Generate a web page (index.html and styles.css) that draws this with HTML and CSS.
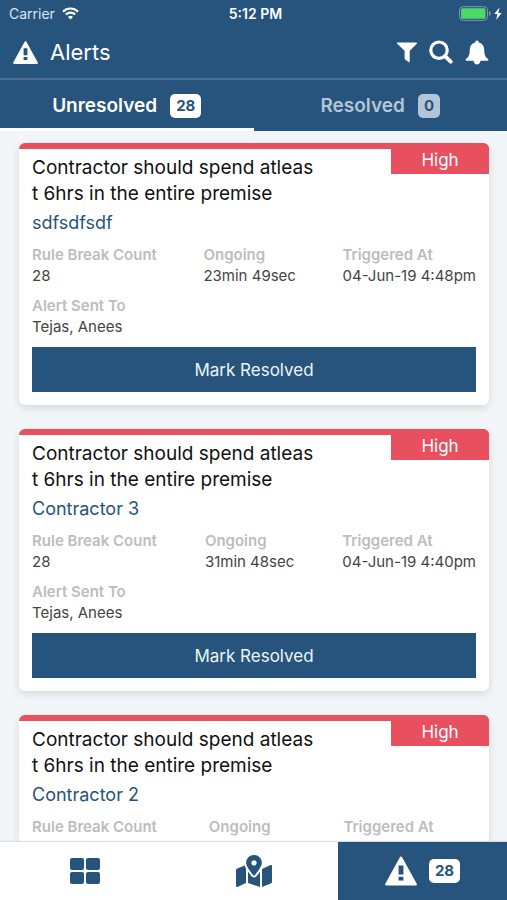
FILE: index.html
```html
<!DOCTYPE html>
<html lang="en">
<head>
  <meta charset="UTF-8" />
  <title>Alerts</title>
  <meta name="viewport" content="width=device-width, initial-scale=1.0" />
  <link rel="stylesheet" href="styles.css">
</head>
<body>

<!-- Shared icons -->
<svg class="sprite" aria-hidden="true">
  <symbol id="icon-warning" viewBox="0 0 25 23">
    <path d="M12.500 1.200L23.900 21.900H1.100Z" fill="currentColor" stroke="currentColor" stroke-width="2" stroke-linejoin="round"/>
    <path class="mark" d="M10.600 7.200h3.800v7h-3.800zM10.600 16h3.800v3h-3.800z"/>
  </symbol>
</svg>

<!-- Header -->
<header class="header">
  <div class="status-bar">
    <div class="carrier">
      <span>Carrier</span>
      <svg width="17" height="13" viewBox="0 0 17 13" fill="none" stroke="#fff" stroke-width="2.200" aria-hidden="true">
        <path d="M1 4.600a10.600 10.600 0 0 1 15 0M3.800 7.500a6.600 6.600 0 0 1 9.400 0"/>
        <path d="M8.500 12.500L6 9.900a3.600 3.600 0 0 1 5 0Z" fill="#fff" stroke="none"/>
      </svg>
    </div>
    <div class="clock">5:12 PM</div>
    <div class="battery">
      <svg width="43" height="15" viewBox="0 0 43 15" aria-hidden="true">
        <rect x="0.500" y="0.700" width="28" height="13.600" rx="3.500" fill="none" stroke="#7d9ab4"/>
        <rect x="2" y="2.300" width="24.500" height="10.400" rx="1.500" fill="#4cd964"/>
        <path d="M30 5v5q1.700-.6 1.700-2.500T30 5z" fill="#7d9ab4"/>
        <path d="M40.500 1.500L35.200 8h3.200l-1.200 6 5.400-7h-3.300z" fill="#fff"/>
      </svg>
    </div>
  </div>
  <div class="toolbar">
    <svg class="title-icon" aria-hidden="true"><use href="#icon-warning"/></svg>
    <h1>Alerts</h1>
    <div class="actions">
      <button aria-label="Filter">
        <svg width="20" height="21" viewBox="0 0 20 21" fill="#fff"><path d="M.7.500h18.600c.7 0 .9.800.5 1.200L12.700 8.800v10.600c0 .7-.7 1-1.200.6l-3.300-2.500c-.4-.3-.6-.7-.6-1.200V8.800L.2 1.700C-.3 1.200 0 .5.700.5z"/></svg>
      </button>
      <button aria-label="Search">
        <svg width="24" height="24" viewBox="0 0 24 24" fill="none" stroke="#fff"><circle cx="10" cy="10.200" r="8.200" stroke-width="3.200"/><path d="M16.300 16.300l5.400 5.400" stroke-width="3.800" stroke-linecap="round"/></svg>
      </button>
      <button aria-label="Notifications">
        <svg width="24" height="25" viewBox="0 0 24 25" fill="#fff"><path d="M12 0.500c1.100 0 1.800.7 1.800 1.900 3.600.9 5.300 3.700 5.400 7.100.1 5.700 1.400 8 3.700 9.300.9.600.5 1.900-.5 1.900H15.500c-.3 2.300-1.600 3.800-3.500 3.800s-3.200-1.500-3.500-3.800H1.600c-1 0-1.400-1.300-.5-1.900 2.300-1.300 3.600-3.600 3.700-9.300.1-3.400 1.800-6.200 5.400-7.100 0-1.200.7-1.900 1.800-1.900z"/></svg>
      </button>
    </div>
  </div>
</header>

<!-- Tabs -->
<nav class="tabs">
  <button class="tab active">Unresolved <span class="badge">28</span></button>
  <button class="tab">Resolved <span class="badge">0</span></button>
</nav>

<!-- Alert list -->
<main class="alerts">
  <article class="card">
    <span class="priority">High</span>
    <h2>Contractor should spend atleas<br>t 6hrs in the entire premise</h2>
    <a class="who" href="#">sdfsdfsdf</a>
    <dl class="details">
      <div><dt>Rule Break Count</dt><dd>28</dd></div>
      <div><dt>Ongoing</dt><dd>23min 49sec</dd></div>
      <div><dt>Triggered At</dt><dd>04-Jun-19 4:48pm</dd></div>
    </dl>
    <dl class="details">
      <div><dt>Alert Sent To</dt><dd>Tejas, Anees</dd></div>
    </dl>
    <button class="resolve">Mark Resolved</button>
  </article>

  <article class="card">
    <span class="priority">High</span>
    <h2>Contractor should spend atleas<br>t 6hrs in the entire premise</h2>
    <a class="who" href="#">Contractor 3</a>
    <dl class="details">
      <div><dt>Rule Break Count</dt><dd>28</dd></div>
      <div><dt>Ongoing</dt><dd>31min 48sec</dd></div>
      <div><dt>Triggered At</dt><dd>04-Jun-19 4:40pm</dd></div>
    </dl>
    <dl class="details">
      <div><dt>Alert Sent To</dt><dd>Tejas, Anees</dd></div>
    </dl>
    <button class="resolve">Mark Resolved</button>
  </article>

  <article class="card">
    <span class="priority">High</span>
    <h2>Contractor should spend atleas<br>t 6hrs in the entire premise</h2>
    <a class="who" href="#">Contractor 2</a>
    <dl class="details">
      <div><dt>Rule Break Count</dt><dd>28</dd></div>
      <div><dt>Ongoing</dt><dd>9min 52sec</dd></div>
      <div><dt>Triggered At</dt><dd>04-Jun-19 5:02pm</dd></div>
    </dl>
    <dl class="details">
      <div><dt>Alert Sent To</dt><dd>Tejas, Anees</dd></div>
    </dl>
    <button class="resolve">Mark Resolved</button>
  </article>
</main>

<!-- Bottom navigation -->
<nav class="bottom-nav">
  <a href="#" aria-label="Dashboard">
    <svg width="30" height="26" viewBox="0 0 30 26" fill="#26547c"><rect width="14" height="12" rx="2"/><rect x="16" width="14" height="12" rx="2"/><rect y="14" width="14" height="12" rx="2"/><rect x="16" y="14" width="14" height="12" rx="2"/></svg>
  </a>
  <a href="#" aria-label="Map">
    <svg width="36" height="32" viewBox="0 0 576 512" fill="#26547c"><path d="M288 0c-69.590 0-126 56.410-126 126 0 56.260 82.350 158.800 113.900 196.020 6.390 7.540 17.820 7.540 24.200 0C331.650 284.800 414 182.260 414 126 414 56.410 357.590 0 288 0zm0 168c-23.200 0-42-18.800-42-42s18.800-42 42-42 42 18.800 42 42-18.800 42-42 42zM20.120 215.950A32.006 32.006 0 0 0 0 245.660v250.320c0 11.320 11.430 19.060 21.940 14.860L160 448V214.920c-8.840-15.980-16.070-31.540-21.250-46.420L20.120 215.950zM288 359.670c-14.070 0-27.380-6.180-36.510-16.960-19.660-23.200-40.570-49.620-59.490-76.720v182l192 64V266c-18.920 27.090-39.820 53.520-59.490 76.720-9.130 10.770-22.440 16.950-36.510 16.950zm266.060-198.510L416 224v288l139.880-55.950A31.996 31.996 0 0 0 576 426.340V176.020c0-11.320-11.430-19.060-21.940-14.860z"/></svg>
  </a>
  <a href="#" class="current" aria-label="Alerts, 28 unresolved">
    <svg class="nav-warning" aria-hidden="true"><use href="#icon-warning"/></svg>
    <span class="badge">28</span>
  </a>
</nav>

</body>
</html>
```
FILE: styles.css
```css
* { box-sizing: border-box; }
body {
  margin: 0;
  height: 100vh;
  overflow: hidden;
  display: flex;
  flex-direction: column;
  background: #f2f6f9;
  color: #111;
  font-family: Inter, "Liberation Sans", sans-serif;
}
button {
  font-family: inherit;
  border: none;
  padding: 0;
  background: none;
  cursor: pointer;
}
svg { display: block; flex: none; }
a { text-decoration: none; }
.sprite { position: absolute; width: 0; height: 0; }
.mark { fill: #26547c; }

/* Header */
.header {
  flex: none;
  background: #26547c;
  color: #fff;
  border-bottom: 2px solid #4d7196;
}
.status-bar {
  display: grid;
  grid-template-columns: 1fr auto 1fr;
  align-items: center;
  height: 26px;
  padding: 0 5px 0 9px;
  font-size: 14px;
}
.carrier {
  display: flex;
  align-items: center;
  gap: 7px;
  color: #dce6ef;
}
.clock { font-weight: 600; }
.battery { display: flex; justify-content: flex-end; }
.toolbar {
  display: flex;
  align-items: center;
  height: 52px;
  padding: 0 18px 0 13px;
}
.title-icon { width: 25px; height: 23px; }
h1 {
  margin: 0 0 0 12px;
  font-size: 22px;
  font-weight: 400;
}
.actions {
  display: flex;
  align-items: center;
  gap: 12px;
  margin-left: auto;
}

/* Tabs */
.tabs {
  flex: none;
  display: flex;
  background: #26547c;
}
.tab {
  flex: 1;
  display: flex;
  align-items: center;
  justify-content: center;
  gap: 13px;
  height: 51px;
  padding-top: 3px;
  border-bottom: 3px solid #26547c;
  color: #b3c6d8;
  font-size: 19px;
  font-weight: 600;
}
.tab.active {
  border-bottom-color: #fff;
  color: #fff;
}
.badge {
  padding: 0 6px;
  border-radius: 5px;
  background: #fff;
  color: #26547c;
  font-size: 15px;
  font-weight: 700;
  line-height: 24px;
}
.tab:not(.active) .badge { background: #b3c6d8; }

/* Alert cards */
.alerts {
  flex: 1;
  min-height: 0;
  overflow: hidden;
  display: flex;
  flex-direction: column;
  gap: 24px;
  padding: 12px 18px 0 19px;
}
.card {
  flex: none;
  position: relative;
  padding: 6px 13px 13px;
  border-top: 6px solid #e8505f;
  border-radius: 6px;
  background: #fff;
  box-shadow: 0 3px 8px rgba(0, 0, 0, 0.12);
}
.priority {
  position: absolute;
  top: -6px;
  right: 0;
  width: 98px;
  padding-top: 3px;
  border-top-right-radius: 6px;
  background: #e8505f;
  color: #fff;
  font-size: 17px;
  line-height: 28px;
  text-align: center;
}
h2 {
  margin: 0;
  font-size: 19px;
  font-weight: 400;
  line-height: 26px;
}
.who {
  display: block;
  margin: 3px 0 8px;
  color: #26547c;
  font-size: 18px;
  line-height: 26px;
}
.details {
  display: flex;
  justify-content: space-between;
  margin: 0 0 9px;
  font-size: 15px;
  line-height: 21px;
}
dt { color: #bdbdbd; font-weight: 600; }
dd { margin: 0; color: #444; }
.resolve {
  display: block;
  width: 100%;
  height: 45px;
  margin-top: 10px;
  background: #26547c;
  color: #eef4f9;
  font-size: 17px;
}

/* Bottom navigation */
.bottom-nav {
  flex: none;
  display: flex;
  height: 58px;
  background: #fff;
  box-shadow: 0 -1px 1px #ddd;
  z-index: 1;
}
.bottom-nav a {
  flex: 1;
  display: flex;
  align-items: center;
  justify-content: center;
  gap: 12px;
}
.bottom-nav .current { background: #26547c; }
.nav-warning { width: 32px; height: 30px; color: #fff; }
```
